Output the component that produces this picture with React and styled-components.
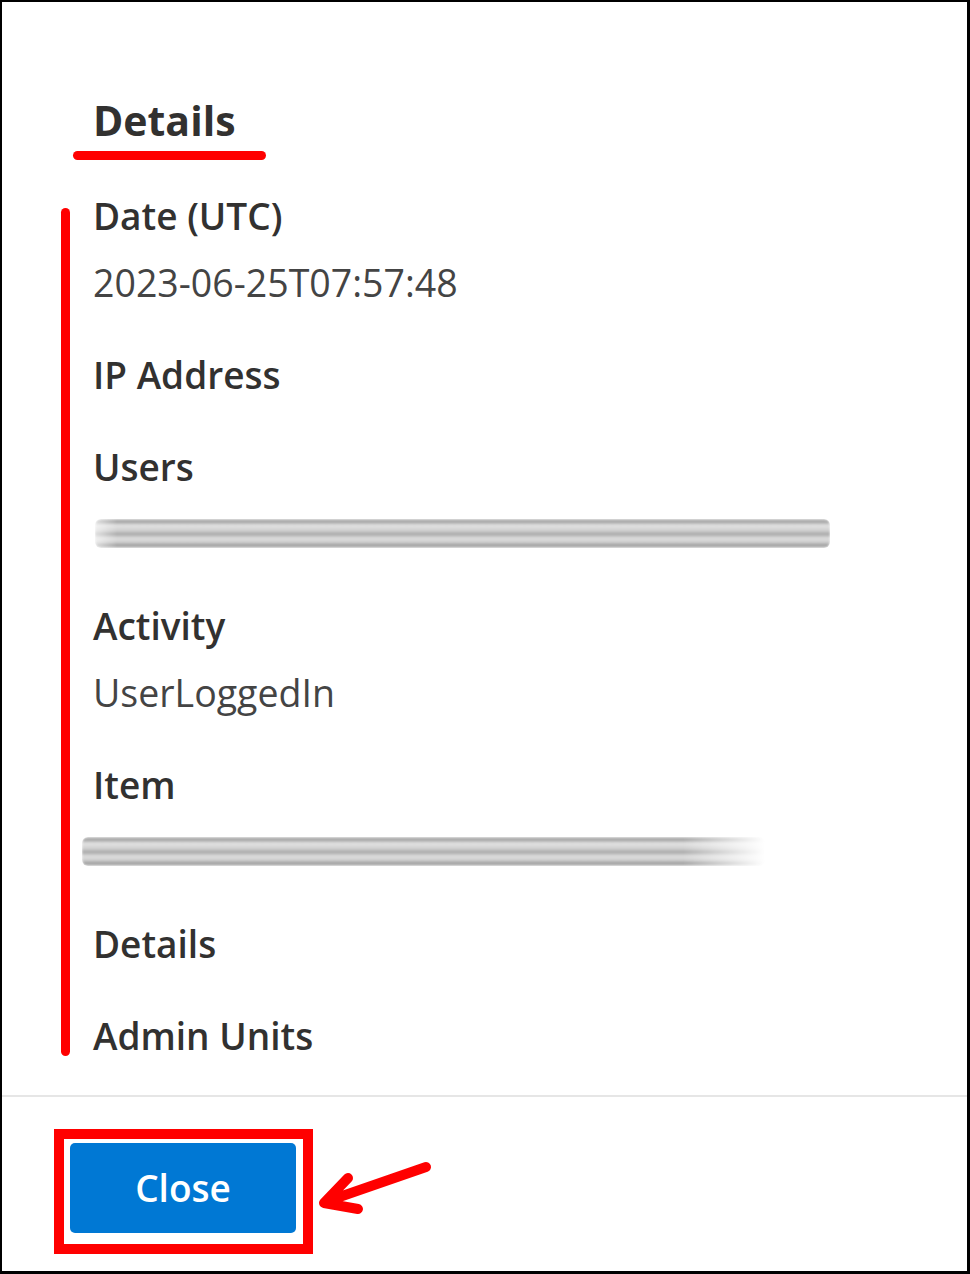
import React from 'react';
import styled, { createGlobalStyle } from 'styled-components';

const GlobalStyle = createGlobalStyle`
  * { box-sizing: border-box; }
  body {
    margin: 0;
    background: #ffffff;
    font-family: "Open Sans", "Noto Sans", "Liberation Sans", sans-serif;
  }
`;

const Frame = styled.div`
  width: 970px;
  height: 1274px;
  border-style: solid;
  border-color: #000;
  border-width: 2px 3px 3px 2px;
  background: #fff;
  display: flex;
  flex-direction: column;
  overflow: hidden;
`;

const Body = styled.div`
  padding: 90px 0 0 91px;
  display: flex;
  flex-direction: column;
`;

const Heading = styled.h2`
  position: relative;
  margin: 0 0 35px;
  font-size: 41px;
  line-height: 56px;
  font-weight: 700;
  color: #323130;

  &::after {
    content: '';
    position: absolute;
    left: -20px;
    top: 59px;
    width: 193px;
    height: 9px;
    border-radius: 5px;
    background: #ff0000;
  }
`;

const FieldList = styled.div`
  position: relative;
  display: flex;
  flex-direction: column;
  gap: 26px;

  &::before {
    content: '';
    position: absolute;
    left: -32px;
    top: 25px;
    width: 9px;
    height: 848px;
    border-radius: 5px;
    background: #ff0000;
  }
`;

const Field = styled.div`
  display: flex;
  flex-direction: column;
`;

const Label = styled.div`
  font-size: 37px;
  line-height: 66px;
  font-weight: 600;
  color: #323130;
`;

const Value = styled.div`
  font-size: 37.5px;
  line-height: 67px;
  font-weight: 400;
  color: #444444;
`;

const RedactedLine = styled.div`
  height: 67px;
  display: flex;
  align-items: center;
`;

const Smudge = styled.div`
  width: ${p => p.$width}px;
  height: 29px;
  margin-left: ${p => p.$shift || 0}px;
  border-radius: 6px;
  background: linear-gradient(
    to bottom,
    #d4d4d4 0%,
    #9e9e9e 8%,
    #e2e2e2 22%,
    #d0d0d0 40%,
    #a8a8a8 52%,
    #dedede 66%,
    #cfcfcf 80%,
    #9a9a9a 92%,
    #d8d8d8 100%
  );
  filter: blur(1.2px);
  ${p => p.$fade && `
    -webkit-mask-image: linear-gradient(to right, #000 88%, transparent 100%);
    mask-image: linear-gradient(to right, #000 88%, transparent 100%);
  `}
  ${p => p.$softStart && `
    -webkit-mask-image: linear-gradient(to right, rgba(0,0,0,0.4) 0%, #000 3%, #000 100%);
    mask-image: linear-gradient(to right, rgba(0,0,0,0.4) 0%, #000 3%, #000 100%);
  `}
`;

const Divider = styled.hr`
  margin: 26px 0 0;
  border: none;
  height: 2px;
  background: #e6e6e6;
`;

const Footer = styled.div`
  padding: 46px 0 0 68px;
`;

const ButtonWrap = styled.div`
  position: relative;
  display: inline-block;
`;

const PrimaryButton = styled.button`
  width: 226px;
  height: 90px;
  border: none;
  border-radius: 5px;
  background: #0078d4;
  color: #fff;
  font-family: "Open Sans", "Noto Sans", sans-serif;
  font-size: 37px;
  font-weight: 600;
  padding: 0 0 2px;
  cursor: pointer;
`;

const Highlight = styled.div`
  position: absolute;
  top: -14px;
  left: -16px;
  right: -17px;
  bottom: -21px;
  border: 10.5px solid #ff0000;
  pointer-events: none;
`;

const Arrow = styled.svg`
  position: absolute;
  left: 245px;
  top: 13px;
  overflow: visible;
`;

const fields = [
  { label: 'Date (UTC)', value: '2023-06-25T07:57:48' },
  { label: 'IP Address' },
  { label: 'Users', redacted: { width: 735, shift: 2, softStart: true } },
  { label: 'Activity', value: 'UserLoggedIn' },
  { label: 'Item', redacted: { width: 683, shift: -11, fade: true } },
  { label: 'Details' },
  { label: 'Admin Units' },
];

export default function App() {
  return (
    <>
      <GlobalStyle />
      <Frame>
        <Body>
          <Heading>Details</Heading>
          <FieldList>
            {fields.map(f => (
              <Field key={f.label}>
                <Label>{f.label}</Label>
                {f.value && <Value>{f.value}</Value>}
                {f.redacted && (
                  <RedactedLine>
                    <Smudge
                      $width={f.redacted.width}
                      $shift={f.redacted.shift}
                      $fade={f.redacted.fade}
                      $softStart={f.redacted.softStart}
                    />
                  </RedactedLine>
                )}
              </Field>
            ))}
          </FieldList>
        </Body>
        <Divider />
        <Footer>
          <ButtonWrap>
            <PrimaryButton>Close</PrimaryButton>
            <Highlight />
            <Arrow width="120" height="60" viewBox="0 0 120 60">
              <path
                d="M111 11 L10 46 M33 22 L9 47 L43 53"
                fill="none"
                stroke="#ff0000"
                strokeWidth="10"
                strokeLinecap="round"
                strokeLinejoin="round"
              />
            </Arrow>
          </ButtonWrap>
        </Footer>
      </Frame>
    </>
  );
}
